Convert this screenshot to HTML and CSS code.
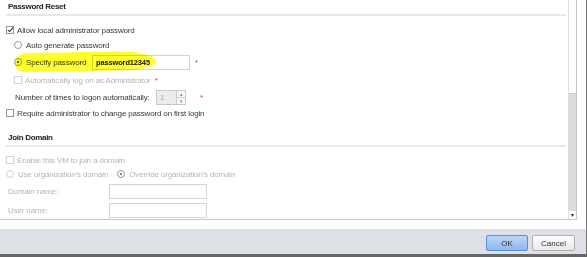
FILE: index.html
```html
<!DOCTYPE html>
<html lang="en">
<head>
<meta charset="UTF-8">
<title>Guest OS Customization</title>
<link rel="stylesheet" href="styles.css">
</head>
<body>
<div class="dialog">
  <div class="body">
    <div class="content">
      <div class="section-title">Password Reset</div>

      <label class="row"><span class="check checked"></span>Allow local administrator password</label>
      <div class="indent">
        <label class="row"><span class="radio"></span>Auto generate password</label>
        <div class="row specify">
          <span class="radio on"></span>
          <span class="lbl-specify">Specify password</span>
          <span class="field pw">password12345</span>
          <span class="req">*</span>
          <div class="marker"></div>
        </div>
        <label class="row disabled auto-logon"><span class="check"></span>Automatically log on as Administrator<span class="req">*</span></label>
        <div class="row count">
          <span class="lbl-count">Number of times to logon automatically:</span>
          <span class="spinner"><span class="spin-val">1</span><span class="spin-btns"><i>▴</i><i>▾</i></span></span>
          <span class="req">*</span>
        </div>
      </div>
      <label class="row"><span class="check"></span>Require administrator to change password on first login</label>

      <div class="section-title second">Join Domain</div>

      <label class="row disabled enable"><span class="check"></span>Enable this VM to join a domain</label>
      <div class="row disabled">
        <span class="radio"></span><span class="opt-use">Use organization's domain</span>
        <span class="radio on"></span>Override organization's domain
      </div>
      <div class="row field-row disabled"><span class="lbl-field">Domain name:</span><span class="field"></span></div>
      <div class="row field-row disabled"><span class="lbl-field">User name:</span><span class="field"></span></div>
    </div>
    <div class="scrollbar">
      <div class="track"></div>
      <div class="thumb"></div>
      <div class="arrow">▾</div>
    </div>
  </div>
  <div class="footer">
    <button class="btn primary">OK</button>
    <button class="btn">Cancel</button>
  </div>
</div>
</body>
</html>
```

FILE: styles.css
```css
body {
  margin: 0;
  background: #fff;
  font-family: "Liberation Sans", Arial, sans-serif;
  font-size: 8px;
  letter-spacing: -0.15px;
  color: #383838;
}

.dialog {
  width: 586px;
  height: 254px;
  border-right: 1px solid #777;
  border-bottom: 3px solid #666;
  display: flex;
  flex-direction: column;
}

.body {
  height: 219px;
  display: flex;
  border-bottom: 1px solid #c8c8c8;
  margin-right: 9px;
}

.content {
  flex: 1;
  padding: 2px 0 0 6px;
  position: relative;
}

.section-title {
  font-weight: bold;
  color: #222;
  padding: 0 0 3px 2px;
  margin-right: 2px;
  border-bottom: 2px solid #e8e8e8;
  margin-bottom: 9px;
  line-height: 9px;
  letter-spacing: -0.3px;
}
.section-title.second {
  margin-top: 15px;
  margin-bottom: 8px;
}

.row {
  display: flex;
  align-items: center;
  height: 10px;
  margin-bottom: 5px;
  white-space: nowrap;
}
.indent {
  padding-left: 8px;
}

.check {
  width: 8px;
  height: 8px;
  border: 1px solid #999;
  background: #fff;
  margin-right: 3px;
  position: relative;
  box-sizing: border-box;
  flex: none;
}
.check.checked::after {
  content: "";
  position: absolute;
  left: 2px;
  top: -1px;
  width: 2px;
  height: 5px;
  border: solid #333;
  border-width: 0 1.5px 1.5px 0;
  transform: rotate(40deg);
}

.radio {
  width: 8px;
  height: 8px;
  border: 1px solid #999;
  border-radius: 50%;
  background: #fff;
  margin-right: 4px;
  box-sizing: border-box;
  position: relative;
  flex: none;
}
.radio.on::after {
  content: "";
  position: absolute;
  left: 2px;
  top: 2px;
  width: 2px;
  height: 2px;
  border-radius: 50%;
  background: #222;
}

.disabled {
  color: #b4b4b4;
}
.disabled .check,
.disabled .radio {
  border-color: #d0d0d0;
}
.disabled .radio.on {
  border-color: #999;
}
.disabled .radio.on::after {
  background: #666;
}

.specify {
  position: relative;
  height: 14px;
  margin-bottom: 6px;
}
.lbl-specify {
  width: 66px;
}
.field {
  width: 98px;
  height: 15px;
  border: 1px solid #d4d4d4;
  box-sizing: border-box;
  background: #fff;
  display: flex;
  align-items: center;
  padding-left: 3px;
}
.field.pw {
  font-weight: bold;
  color: #111;
  font-size: 7.5px;
}
.req {
  color: #e03c4c;
  margin-left: 5px;
  font-size: 8px;
}
.auto-logon .req {
  margin-left: 4px;
}

.marker {
  position: absolute;
  left: 1px;
  top: -3px;
  width: 141px;
  height: 19px;
  background: #ffff30;
  border-radius: 12px 40px 30px 8px / 10px 10px 8px 8px;
  mix-blend-mode: multiply;
  transform: rotate(-1deg);
}

.count {
  height: 15px;
  margin-bottom: 3px;
  padding-left: 1px;
}
.lbl-count {
  width: 141px;
}
.spinner {
  width: 30px;
  height: 15px;
  border: 1px solid #c8c8c8;
  box-sizing: border-box;
  background: #ececec;
  display: flex;
  color: #aaa;
}
.spin-val {
  flex: 1;
  display: flex;
  align-items: center;
  padding-left: 3px;
}
.spin-btns {
  width: 8px;
  border-left: 1px solid #ccc;
  display: flex;
  flex-direction: column;
  background: #f6f6f6;
}
.spin-btns i {
  flex: 1;
  font-style: normal;
  font-size: 5px;
  line-height: 6px;
  text-align: center;
  color: #888;
}
.spin-btns i + i {
  border-top: 1px solid #ccc;
}
.count .req {
  margin-left: 14px;
}

.enable {
  margin-bottom: 4px;
}
.opt-use {
  margin-right: 9px;
}
.field-row {
  height: 15px;
  margin-bottom: 4px;
  padding-left: 2px;
}
.lbl-field {
  width: 101px;
}

.scrollbar {
  width: 7px;
  border-left: 1px solid #e0e0e0;
  border-right: 1px solid #c8c8c8;
  display: flex;
  flex-direction: column;
}
.track {
  height: 93px;
  background: #fff;
}
.thumb {
  flex: 1;
  background: #dcdcdc;
  border-top: 1px solid #c8c8c8;
}
.arrow {
  height: 8px;
  font-size: 6px;
  line-height: 8px;
  text-align: center;
  color: #333;
  background: #fff;
}

.footer {
  flex: 1;
  margin-top: 9px;
  background: #dde0e7;
  display: flex;
  justify-content: flex-end;
  align-items: flex-start;
  gap: 4px;
  padding: 6px 11px 0 0;
}
.btn {
  height: 16px;
  font-family: "Liberation Sans", Arial, sans-serif;
  font-size: 8px;
  color: #333;
  border: 1px solid #b0b0b0;
  border-radius: 2px;
  background: linear-gradient(#fff, #e8e8e8);
  width: 43px;
  padding: 0;
}
.btn.primary {
  width: 42px;
  border-color: #5b8fd6;
  background: linear-gradient(#bcd6fa, #8fb6ee);
}
```
